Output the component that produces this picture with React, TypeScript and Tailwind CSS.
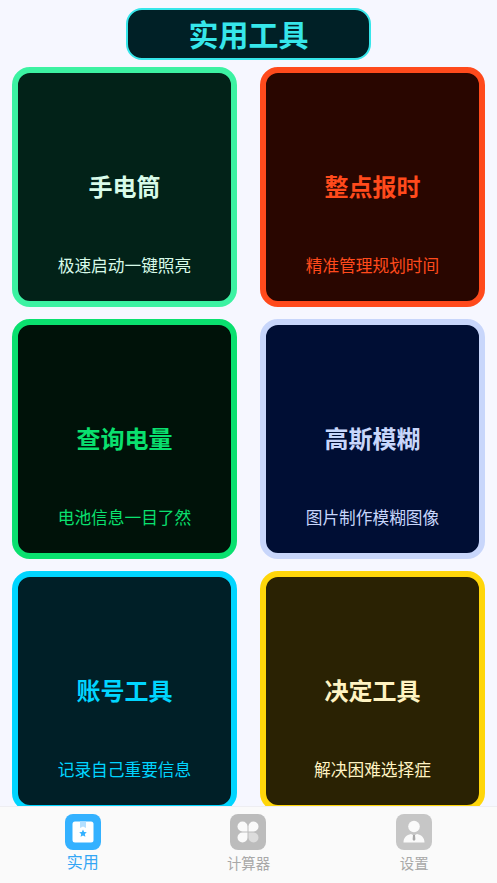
const font = { fontFamily: '"Noto Sans CJK SC", "Liberation Sans", sans-serif' };

type Card = { title: string; sub: string; border: string; bg: string; titleColor: string; subColor: string };

const cards: Card[] = [
  { title: "手电筒", sub: "极速启动一键照亮", border: "border-[#3cf2a2]", bg: "bg-[#022218]", titleColor: "text-[#d9fbe9]", subColor: "text-[#d9fbe9]" },
  { title: "整点报时", sub: "精准管理规划时间", border: "border-[#ff4a1c]", bg: "bg-[#290600]", titleColor: "text-[#ff4a1c]", subColor: "text-[#ff4a1c]" },
  { title: "查询电量", sub: "电池信息一目了然", border: "border-[#0ae06f]", bg: "bg-[#001209]", titleColor: "text-[#0ae06f]", subColor: "text-[#0ae06f]" },
  { title: "高斯模糊", sub: "图片制作模糊图像", border: "border-[#c8d6fb]", bg: "bg-[#000e34]", titleColor: "text-[#c8d6fb]", subColor: "text-[#c8d6fb]" },
  { title: "账号工具", sub: "记录自己重要信息", border: "border-[#00d5ff]", bg: "bg-[#001f27]", titleColor: "text-[#00d5ff]", subColor: "text-[#00d5ff]" },
  { title: "决定工具", sub: "解决困难选择症", border: "border-[#ffd60a]", bg: "bg-[#2a2203]", titleColor: "text-[#fff3c2]", subColor: "text-[#fff3c2]" },
];

function ToolCard({ c }: { c: Card }) {
  return (
    <div className={`h-[240px] rounded-[18px] border-[6px] ${c.border} ${c.bg} flex flex-col items-center pt-[95px]`}>
      <div className={`h-[36px] leading-[36px] text-[24px] font-bold ${c.titleColor}`}>{c.title}</div>
      <div className={`mt-[47px] h-[28px] leading-[28px] text-[16.7px] ${c.subColor}`}>{c.sub}</div>
    </div>
  );
}

function BoxIcon() {
  return (
    <svg width="36" height="36" viewBox="0 0 36 36">
      <rect width="36" height="36" rx="8" fill="#33b1ff" />
      <rect x="7.5" y="7.5" width="21" height="21" rx="2.5" fill="#fff" />
      <path d="M15 7.5h6v6.5l-3-1.6-3 1.6z" fill="#b5e0ff" />
      <path d="M18 15.5l1.1 2.5 2.7.3-2 1.8.6 2.7-2.4-1.4-2.4 1.4.6-2.7-2-1.8 2.7-.3z" fill="#33b1ff" />
    </svg>
  );
}

function CloverIcon() {
  return (
    <svg width="36" height="36" viewBox="0 0 36 36">
      <rect width="36" height="36" rx="8" fill="#bcbcbc" />
      <path d="M12.5 7.5a5 5 0 0 1 5 5v5h-5a5 5 0 0 1 0-10z" fill="#fafafa" />
      <path d="M23.5 7.5a5 5 0 0 1 0 10h-5v-5a5 5 0 0 1 5-5z" fill="#fafafa" />
      <path d="M12.5 28.5a5 5 0 0 1 0-10h5v5a5 5 0 0 1-5 5z" fill="#fafafa" />
      <path d="M23.5 28.5a5 5 0 0 0 0-10h-5v5a5 5 0 0 0 5 5z" fill="#dcdcdc" />
    </svg>
  );
}

function PersonIcon() {
  return (
    <svg width="36" height="36" viewBox="0 0 36 36">
      <rect width="36" height="36" rx="8" fill="#c6c6c6" />
      <circle cx="18" cy="12.5" r="5.8" fill="#fafafa" />
      <path d="M7.5 28.5c0-5 3-7.5 7.5-8.5l3 1.5 3-1.5c4.5 1 7.5 3.5 7.5 8.5z" fill="#fafafa" />
      <path d="M17 21h2l.4 4.5-1.4 1.5-1.4-1.5z" fill="#a8a8a8" />
    </svg>
  );
}

export default function App() {
  return (
    <div style={font} className="h-[883px] w-[497px] overflow-hidden flex flex-col bg-[#f6f7ff]">
      <div className="flex-1 min-h-0 overflow-hidden px-3 pt-2">
        <div className="flex justify-center mb-[7px]">
          <div className="w-[245px] h-[52px] rounded-[16px] border-[2.5px] border-[#36e6ea] bg-[#002026] flex items-center justify-center pb-[2px] text-[30px] font-bold text-[#36e6ea]">
            实用工具
          </div>
        </div>
        <div className="grid grid-cols-[225px_225px] gap-x-[23px] gap-y-[12px]">
          {cards.map((c) => (
            <ToolCard key={c.title} c={c} />
          ))}
        </div>
      </div>
      <div className="h-[77px] shrink-0 bg-[#fafafa] border-t border-[#eeeef2] grid grid-cols-3">
        <div className="flex flex-col items-center pt-[7px]">
          <BoxIcon />
          <div className="h-[22px] leading-[22px] text-[16px] text-[#33a6f5]">实用</div>
        </div>
        <div className="flex flex-col items-center pt-[7px]">
          <CloverIcon />
          <div className="mt-[1px] h-[24px] leading-[24px] text-[14.4px] text-[#a8a8a8]">计算器</div>
        </div>
        <div className="flex flex-col items-center pt-[7px]">
          <PersonIcon />
          <div className="mt-[1px] h-[24px] leading-[24px] text-[14.4px] text-[#a8a8a8]">设置</div>
        </div>
      </div>
    </div>
  );
}
